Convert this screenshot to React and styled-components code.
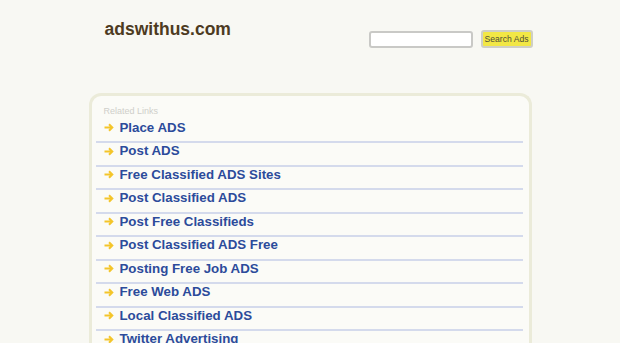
import styled, { createGlobalStyle } from "styled-components";

const GlobalStyle = createGlobalStyle`
  body {
    margin: 0;
    background: #f8f8f3;
    font-family: "Liberation Sans", Arial, sans-serif;
  }
`;

const Page = styled.div`
  width: 443px;
  margin: 0 auto;
`;

const Header = styled.div`
  display: flex;
  justify-content: space-between;
  align-items: flex-start;
  height: 93px;
`;

const Logo = styled.div`
  margin: 19px 0 0 16px;
  font-size: 17.5px;
  font-weight: bold;
  line-height: 21px;
  color: #4d3b1f;
`;

const SearchForm = styled.form`
  display: flex;
  align-items: center;
  gap: 8px;
  margin: 30px -1px 0 0;
`;

const SearchInput = styled.input`
  box-sizing: border-box;
  width: 104px;
  height: 17px;
  margin-top: 1px;
  padding: 0 3px;
  border: 2px solid #c9c9c6;
  border-radius: 3px;
  background: #fff;
  outline: none;
`;

const SearchButton = styled.button`
  box-sizing: border-box;
  width: 52px;
  height: 18px;
  padding: 0;
  border: 2px solid #cfcfc4;
  border-radius: 3px;
  background: #f2e745;
  color: #4f4f36;
  font-family: "Liberation Sans", Arial, sans-serif;
  font-size: 8.6px;
  line-height: 14px;
`;

const Panel = styled.div`
  box-sizing: border-box;
  border: 3px solid #ebebd9;
  border-bottom: none;
  border-radius: 12px 12px 0 0;
  background: #fbfbf7;
  padding: 10px 6px 40px 4px;
`;

const Caption = styled.div`
  padding-left: 8px;
  font-size: 9px;
  line-height: 11px;
  color: #cfcfca;
  margin-bottom: 2.5px;
`;

const LinkRow = styled.a`
  display: flex;
  align-items: center;
  gap: 6px;
  padding: 0 0 5.5px 8px;
  border-bottom: 2px solid #d4daec;
  font-size: 13.3px;
  font-weight: bold;
  line-height: 16px;
  color: #2c4b9b;
  text-decoration: none;
`;

const Arrow = () => (
  <svg width="10" height="9" viewBox="0 0 10 9">
    <path
      d="M0.5 4.5 H8.2 M5 1.2 L8.3 4.5 L5 7.8"
      fill="none"
      stroke="#f4c52a"
      strokeWidth="2"
    />
  </svg>
);

const links = [
  "Place ADS",
  "Post ADS",
  "Free Classified ADS Sites",
  "Post Classified ADS",
  "Post Free Classifieds",
  "Post Classified ADS Free",
  "Posting Free Job ADS",
  "Free Web ADS",
  "Local Classified ADS",
  "Twitter Advertising",
];

export default function App() {
  return (
    <>
      <GlobalStyle />
      <Page>
        <Header>
          <Logo>adswithus.com</Logo>
          <SearchForm onSubmit={(e) => e.preventDefault()}>
            <SearchInput type="text" />
            <SearchButton type="submit">Search Ads</SearchButton>
          </SearchForm>
        </Header>
        <Panel>
          <Caption>Related Links</Caption>
          {links.map((l) => (
            <LinkRow key={l} href="#">
              <Arrow />
              {l}
            </LinkRow>
          ))}
        </Panel>
      </Page>
    </>
  );
}
